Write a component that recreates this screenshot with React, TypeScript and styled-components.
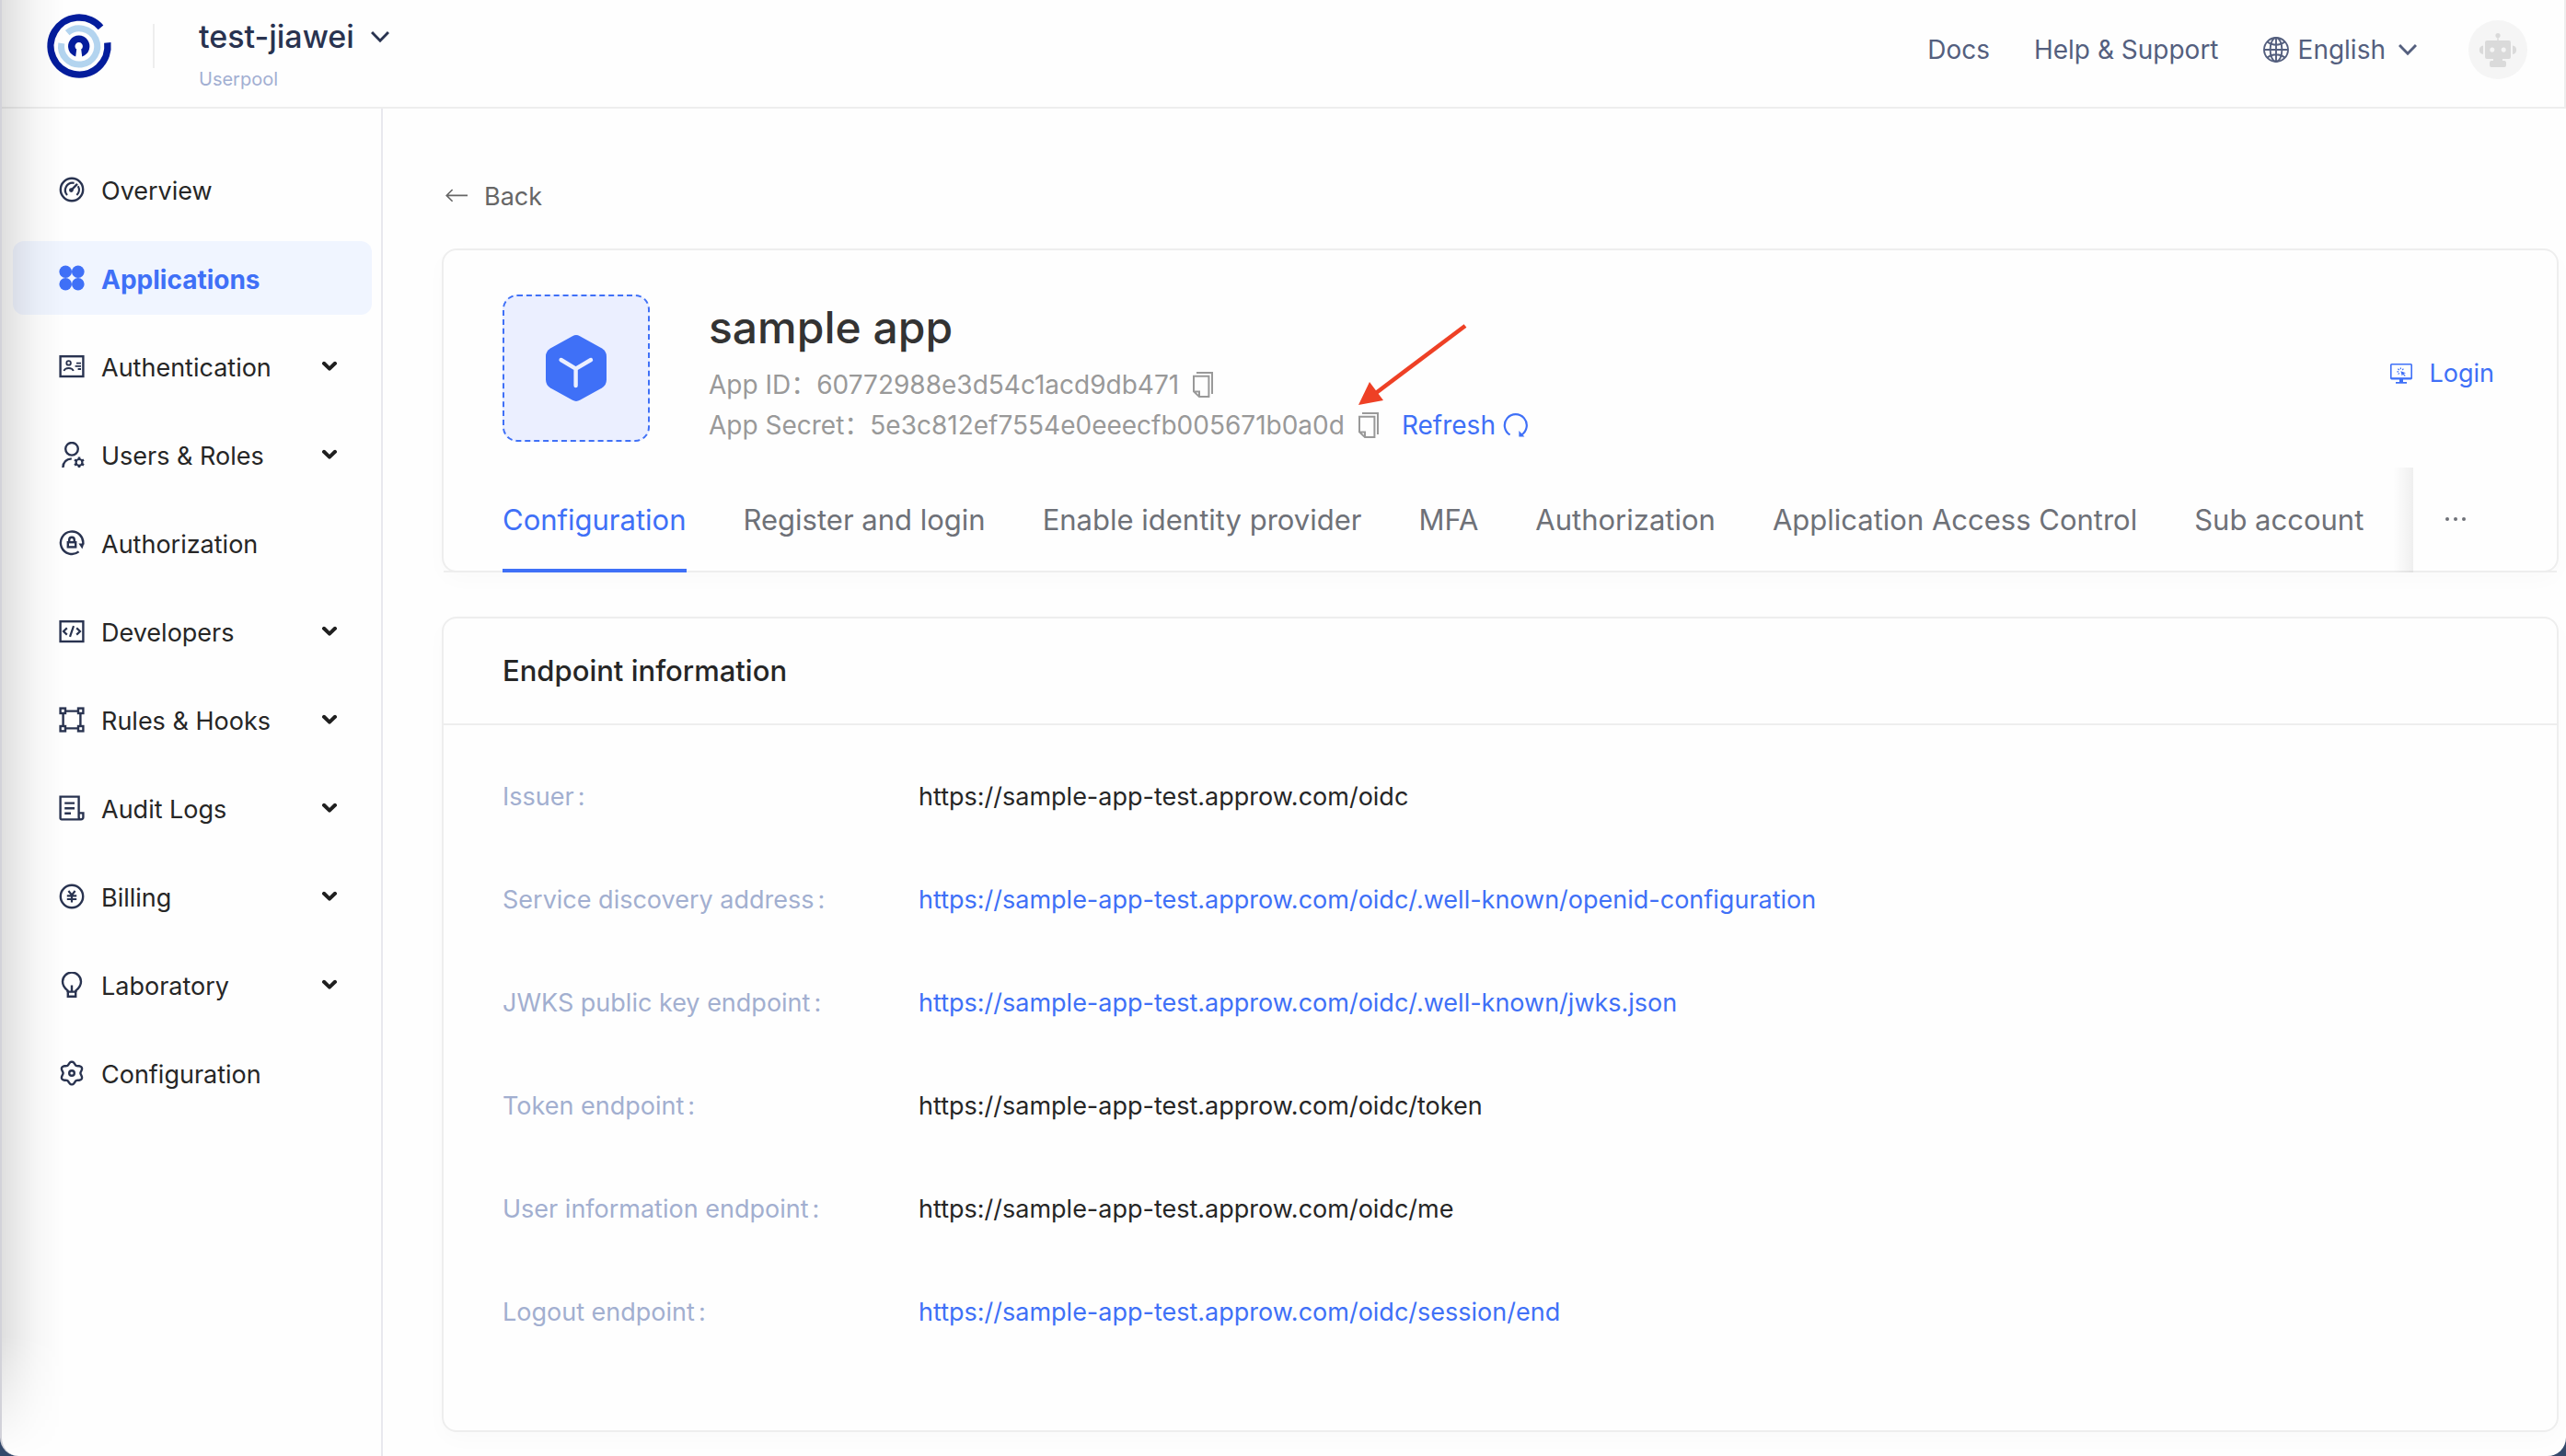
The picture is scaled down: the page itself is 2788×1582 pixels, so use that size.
import React from "react";
import styled, { createGlobalStyle, css } from "styled-components";

const blue = "#3f70f7";
const line = "#eeeeee";

const GlobalStyle = createGlobalStyle`
  *, *::before, *::after { box-sizing: border-box; }
  body {
    margin: 0;
    background: #34496b;
    color: #262626;
    font-family: Inter, "Noto Sans CJK SC", sans-serif;
    font-size: 27px;
    line-height: 44px;
  }
  h1, h2, p, dl, dd, ul { margin: 0; padding: 0; }
  a { color: inherit; text-decoration: none; }
  button {
    padding: 0;
    border: 0;
    background: none;
    color: inherit;
    font: inherit;
    cursor: pointer;
  }
  svg { display: block; flex: none; }
`;

const Window = styled.div`
  position: relative;
  display: flex;
  flex-direction: column;
  min-height: 100vh;
  overflow: hidden;
  border-left: 2px solid #d2d2d9;
  border-radius: 0 0 20px 20px;
  background: #fefefe;

  &::after {
    content: "";
    position: absolute;
    inset: 0 auto 0 0;
    width: 68px;
    pointer-events: none;
    background: linear-gradient(
      to right,
      rgba(0, 0, 0, 0.12),
      rgba(0, 0, 0, 0.08) 25%,
      rgba(0, 0, 0, 0.03) 55%,
      transparent
    );
    mask-image: linear-gradient(to bottom, #000 calc(100% - 130px), transparent);
  }
`;

const Header = styled.header`
  display: flex;
  justify-content: space-between;
  height: 118px;
  padding: 0 40px 0 48px;
  border-right: 2px solid ${line};
  border-bottom: 2px solid ${line};
`;

const Brand = styled.div`
  display: flex;
  align-items: flex-start;
  padding-top: 14px;
`;

const Divider = styled.span`
  width: 2px;
  height: 48px;
  margin: 12px 48px 0 44px;
  background: ${line};
`;

const Pool = styled.div`
  padding-top: 2px;
`;

const PoolButton = styled.button`
  display: flex;
  align-items: center;
  gap: 18px;
  color: #293350;
  font-size: 34px;
  font-weight: 500;
  line-height: 48px;
`;

const PoolKind = styled.p`
  margin-top: 8px;
  color: #a2afd2;
  font-size: 20px;
  line-height: 28px;
`;

const HeaderNav = styled.nav`
  display: flex;
  align-items: center;
  gap: 48px;
  padding-bottom: 8px;
  color: #545f7e;
  font-size: 28px;
`;

const Language = styled.button`
  display: flex;
  align-items: center;
  gap: 10px;

  svg:last-child { margin-left: 4px; }
`;

const Avatar = styled.button`
  width: 64px;
  height: 64px;
  margin-left: 8px;
  border-radius: 50%;
  background: #f5f5f5;
`;

const Body = styled.div`
  display: flex;
  flex: 1;
`;

const Sidebar = styled.nav`
  flex: none;
  width: 414px;
  padding: 48px 10px 48px 12px;
  border-right: 2px solid #e8e8ee;
`;

const MenuList = styled.ul`
  display: flex;
  flex-direction: column;
  gap: 16px;
  list-style: none;
`;

const MenuLink = styled.a<{ $active?: boolean }>`
  display: flex;
  align-items: center;
  gap: 18px;
  height: 80px;
  padding: 0 38px 0 50px;
  border-radius: 12px;
  color: #262626;

  > svg:first-child { color: #293350; }

  ${(p) =>
    p.$active &&
    css`
      background: #f0f5ff;
      color: ${blue};
      font-size: 28px;
      font-weight: 700;
      > svg:first-child { color: ${blue}; }
    `}
`;

const MenuText = styled.span`
  flex: 1;
  padding-top: 4px;
`;

const Main = styled.main`
  flex: 1;
  min-width: 0;
  padding: 74px 8px 26px 64px;
`;

const BackLink = styled.a`
  display: inline-flex;
  align-items: center;
  gap: 18px;
  margin-bottom: 34px;
  padding-left: 4px;
  color: #666666;
  vertical-align: top;
`;

const Card = styled.section`
  border: 2px solid ${line};
  border-radius: 16px;
  background: #fefefe;
  box-shadow: 0 8px 24px rgba(0, 30, 20, 0.02);

  & + & { margin-top: 48px; }
`;

const AppSummary = styled.div`
  display: flex;
  padding: 48px 64px 24px;
`;

const AppIcon = styled.div`
  display: grid;
  place-items: center;
  width: 160px;
  height: 160px;
  border: 2px dashed ${blue};
  border-radius: 16px;
  background: #ebefff;
`;

const AppText = styled.div`
  flex: 1;
  margin-left: 64px;
  padding-top: 4px;
  font-size: 28px;
`;

const AppName = styled.h1`
  margin-bottom: 8px;
  color: #333333;
  font-size: 48px;
  font-weight: 500;
  line-height: 64px;
`;

const Credential = styled.div`
  display: flex;
  align-items: center;
  width: max-content;
  color: #999999;
`;

const CopySpot = styled.span`
  position: relative;
  display: flex;
  margin-left: 14px;
`;

const Pointer = styled.svg`
  position: absolute;
  right: -96px;
  bottom: 34px;
  pointer-events: none;
`;

const RefreshButton = styled.button`
  display: flex;
  align-items: center;
  gap: 8px;
  margin-left: 24px;
  color: ${blue};
`;

const LoginLink = styled.a`
  display: flex;
  align-items: center;
  gap: 18px;
  align-self: flex-start;
  margin: 64px 4px 0 0;
  color: ${blue};
`;

const TabBar = styled.div`
  display: flex;
  height: 114px;
  margin-bottom: -2px;
  border-bottom: 2px solid ${line};
`;

const TabList = styled.div`
  display: flex;
  flex: 1;
  gap: 62px;
  min-width: 0;
  padding-left: 64px;
  color: #6e7178;
  font-size: 31px;
  white-space: nowrap;
`;

const Tab = styled.button`
  position: relative;
  padding-top: 2px;

  &[aria-selected="true"] { color: ${blue}; }

  &[aria-selected="true"]::after {
    content: "";
    position: absolute;
    inset: auto 0 -2px;
    height: 4px;
    background: ${blue};
  }
`;

const MoreButton = styled.button`
  position: relative;
  display: flex;
  align-items: center;
  width: 156px;
  padding-left: 34px;
  color: #6e7178;

  &::before {
    content: "";
    position: absolute;
    inset: 0 100% -2px auto;
    width: 22px;
    background: linear-gradient(to right, transparent, rgba(0, 0, 0, 0.06));
  }
`;

const CardTitle = styled.h2`
  padding: 35px 64px;
  border-bottom: 2px solid ${line};
  font-size: 31px;
  font-weight: 500;
`;

const EndpointList = styled.dl`
  padding: 46px 64px 48px;
`;

const EndpointRow = styled.div`
  display: flex;
  align-items: center;
  height: 64px;
  margin-bottom: 48px;
`;

const EndpointName = styled.dt`
  flex: none;
  width: 452px;
  color: #a2afd0;

  &::after {
    content: ":";
    margin-left: 4px;
  }
`;

const EndpointLink = styled.a`
  color: ${blue};
`;

const Stroke = ({
  size = 28,
  width = 2.4,
  children,
}: {
  size?: number;
  width?: number;
  children: React.ReactNode;
}) => (
  <svg
    width={size}
    height={size}
    viewBox="0 0 28 28"
    fill="none"
    stroke="currentColor"
    strokeWidth={width}
    aria-hidden="true"
  >
    {children}
  </svg>
);

const Logo = () => (
  <svg width="72" height="72" viewBox="0 0 72 72" fill="none" aria-label="Approw" role="img">
    <path d="M59.5 15.8A31 31 0 1 0 66.8 32.4" stroke="#041d9c" strokeWidth="7.4" />
    <path d="M23.2 21.7A19.6 19.6 0 1 1 16.8 33" stroke="#b3d4ef" strokeWidth="7" />
    <path
      d="M32.2 47.4A11.7 11.7 0 1 1 39.2 47.4L38.2 39.6A4.2 4.2 0 1 0 33.2 39.6Z"
      fill="#041d9c"
    />
  </svg>
);

const ChevronIcon = () => (
  <svg width="20" height="14" viewBox="0 0 20 14" fill="none" stroke="currentColor" strokeWidth="3" aria-hidden="true">
    <path d="M1 2L10 11.2L19 2" />
  </svg>
);

const MenuChevron = () => (
  <svg width="16" height="12" viewBox="0 0 16 12" fill="none" stroke="#1f1f1f" strokeWidth="4" strokeLinecap="round" strokeLinejoin="round" aria-hidden="true">
    <path d="M2 2.8L8 8.6L14 2.8" />
  </svg>
);

const GlobeIcon = () => (
  <Stroke width={1.9}>
    <circle cx="14" cy="14" r="13" />
    <ellipse cx="14" cy="14" rx="6.4" ry="13" />
    <path d="M14 1V27M1 14H27M4.5 5.5C10 9.8 18 9.8 23.5 5.5M4.5 22.5C10 18.2 18 18.2 23.5 22.5" />
  </Stroke>
);

const RobotIcon = () => (
  <svg width="64" height="64" viewBox="0 0 64 64" fill="#dadada" aria-hidden="true">
    <circle cx="32" cy="16.5" r="2.6" />
    <rect x="31.3" y="17" width="1.4" height="6" />
    <path d="M16 27.5V37A4.8 4.8 0 0 1 16 27.5ZM48 27.5A4.8 4.8 0 0 1 48 37Z" />
    <path
      fillRule="evenodd"
      d="M20 22H44A2 2 0 0 1 46 24V40A2 2 0 0 1 44 42H37V44H39A2 2 0 0 1 41 46V49A2 2 0 0 1 39 51H25A2 2 0 0 1 23 49V46A2 2 0 0 1 25 44H27V42H20A2 2 0 0 1 18 40V24A2 2 0 0 1 20 22ZM25.8 29.4A2.5 2.7 0 1 0 25.8 34.8A2.5 2.7 0 1 0 25.8 29.4ZM38.2 29.4A2.5 2.7 0 1 0 38.2 34.8A2.5 2.7 0 1 0 38.2 29.4Z"
    />
  </svg>
);

const OverviewIcon = () => (
  <Stroke>
    <circle cx="14" cy="14" r="12.2" />
    <path d="M9 20A8 8 0 0 1 16.6 6.8M20.8 10.2A8 8 0 0 1 19.4 20" strokeWidth="2.2" />
    <circle cx="13.4" cy="14.6" r="2.4" fill="currentColor" stroke="none" />
    <path d="M13.4 14.6L20 7.8" />
  </Stroke>
);

const AppsIcon = () => (
  <svg width="28" height="28" viewBox="0 0 28 28" fill="currentColor" aria-hidden="true">
    <circle cx="7.2" cy="7.2" r="6.8" />
    <circle cx="20.8" cy="7.2" r="6.8" />
    <circle cx="7.2" cy="20.8" r="6.8" />
    <circle cx="20.8" cy="20.8" r="6.8" />
  </svg>
);

const IdCardIcon = () => (
  <Stroke>
    <rect x="1.6" y="3.2" width="24.8" height="21.8" />
    <circle cx="10.6" cy="10.4" r="2.3" strokeWidth="1.8" />
    <path d="M5.4 19C7 15 14.2 15 15.8 19M19 10.6H24M17.6 13.8H24M20.6 17H24" strokeWidth="1.8" />
  </Stroke>
);

const UserGearIcon = () => (
  <Stroke>
    <circle cx="14" cy="7.8" r="6.8" />
    <path d="M4.4 28C4.6 22 8 18.8 13.8 18.4" />
    <circle cx="22" cy="22.4" r="3.4" strokeWidth="2.2" />
    <path d="M22 16.6V19M22 25.8V28.2M17 19.5L19 20.7M25 24.1L27 25.3M17 25.3L19 24.1M25 20.7L27 19.5" strokeWidth="2.6" />
  </Stroke>
);

const LockCycleIcon = () => (
  <Stroke>
    <path d="M26.2 15.5A12.2 12.2 0 1 0 21.6 23.4" />
    <path d="M21.4 14.6H27.4L25.4 20.4Z" fill="currentColor" stroke="none" />
    <rect x="9.8" y="13.2" width="8.4" height="5.2" />
    <path d="M11.2 13V10.6A2.8 2.8 0 0 1 16.8 10.6V13" />
  </Stroke>
);

const CodeIcon = () => (
  <Stroke>
    <rect x="1.6" y="3.2" width="24.8" height="21.8" />
    <path d="M8.8 10.4L5 14L8.8 17.6M19.2 10.4L23 14L19.2 17.6M16 8.2L12 19.8" strokeWidth="2.2" />
  </Stroke>
);

const NodesIcon = () => (
  <Stroke>
    <path d="M8 4.6H20M8 23.4H20M4.6 8V20M23.4 8V20" />
    <rect x="1.6" y="1.6" width="5.4" height="5.4" />
    <rect x="21" y="1.6" width="5.4" height="5.4" />
    <rect x="1.6" y="21" width="5.4" height="5.4" />
    <rect x="21" y="21" width="5.4" height="5.4" />
  </Stroke>
);

const LogIcon = () => (
  <Stroke>
    <path d="M24 26.4H3A1.4 1.4 0 0 1 1.6 25V1.6H21.6V24A2.4 2.4 0 0 0 26.4 24V19.4H21.6" />
    <path d="M6.2 8.6H17M6.2 14.2H17M6.2 19.8H13" />
  </Stroke>
);

const YenIcon = () => (
  <Stroke>
    <circle cx="14" cy="14" r="12.2" />
    <path d="M10.4 8L14 12.4L17.6 8M14 12V20.4M8.8 13.4H19.2M8.8 17H19.2" strokeWidth="2.2" />
  </Stroke>
);

const BulbIcon = () => (
  <Stroke>
    <path d="M9.6 22V20.4C6.4 18 4 15 4 10.6A10 10 0 0 1 24 10.6C24 15 21.6 18 18.4 20.4V22" />
    <path d="M14 14.4V21.6M9.8 21.6H18.2V26.8H9.8Z" />
  </Stroke>
);

const gearPath =
  Array.from({ length: 72 }, (_, i) => {
    const angle = (i * 5 * Math.PI) / 180;
    const radius = 10.9 + 1.5 * Math.cos(6 * angle);
    const x = (14 + radius * Math.sin(angle)).toFixed(2);
    const y = (14 - radius * Math.cos(angle)).toFixed(2);
    return `${i === 0 ? "M" : "L"}${x} ${y}`;
  }).join("") + "Z";

const GearIcon = () => (
  <Stroke>
    <path d={gearPath} strokeLinejoin="round" />
    <circle cx="14" cy="14" r="2.8" />
  </Stroke>
);

const ArrowLeftIcon = () => (
  <svg width="24" height="18" viewBox="0 0 24 18" fill="none" stroke="currentColor" strokeWidth="1.6" aria-hidden="true">
    <path d="M24 7.4H1.4M7.6 1L1.2 7.4L7.6 13.8" />
  </svg>
);

const CubeIcon = () => (
  <svg width="66" height="74" viewBox="0 0 66 74" aria-hidden="true">
    <path
      fill={blue}
      d="M29 2.2Q33 0 37 2.2L61 15.6Q66 18.6 66 24.5V49.5Q66 55.4 61 58.4L37 71.8Q33 74 29 71.8L5 58.4Q0 55.4 0 49.5V24.5Q0 18.6 5 15.6Z"
    />
    <path
      d="M16.6 28L32.6 37.6L49 28M32.6 37.6V56"
      fill="none"
      stroke="#ebefff"
      strokeWidth="4.4"
      strokeLinecap="round"
    />
  </svg>
);

const CopyIcon = () => (
  <svg width="24" height="28" viewBox="0 0 24 28" fill="none" stroke="currentColor" strokeWidth="2" aria-hidden="true">
    <path d="M5 1H22V24" />
    <path d="M2 4.8H18.4V27H8L2 21.4ZM2 21.4H8V27" />
  </svg>
);

const RefreshIcon = () => (
  <svg width="28" height="28" viewBox="0 0 28 28" aria-hidden="true">
    <path d="M7.6 24.4A12 12 0 1 1 20 24.4" fill="none" stroke="currentColor" strokeWidth="2.2" />
    <path d="M17.4 20V26.6H23.4Z" fill="currentColor" />
  </svg>
);

const MonitorIcon = () => (
  <svg width="24" height="24" viewBox="0 0 24 24" fill="none" stroke="currentColor" strokeWidth="1.6" aria-hidden="true">
    <rect x="0.8" y="1.8" width="22.4" height="15.8" rx="0.8" />
    <path d="M12 18V21.4" strokeWidth="4" />
    <path d="M6 21.8H18M1 17.2H23" strokeWidth="1.8" />
    <path d="M11.4 9.2L17 11.2L14.6 12L16.8 14.2L15.6 14.8L13.8 12.8L12.8 14.4Z" fill="currentColor" stroke="none" />
    <path d="M11.4 5.4V7.2M7.4 9.8H9.2M8.4 6.8L9.8 8M14.4 6.6L13.2 8M8.6 12.6L10 11.4" strokeWidth="1.2" />
  </svg>
);

const DotsIcon = () => (
  <svg width="24" height="6" viewBox="0 0 24 6" fill="currentColor" aria-hidden="true">
    <circle cx="3" cy="3" r="2" />
    <circle cx="12" cy="3" r="2" />
    <circle cx="21" cy="3" r="2" />
  </svg>
);

const menu = [
  { label: "Overview", Icon: OverviewIcon },
  { label: "Applications", Icon: AppsIcon, active: true },
  { label: "Authentication", Icon: IdCardIcon, nested: true },
  { label: "Users & Roles", Icon: UserGearIcon, nested: true },
  { label: "Authorization", Icon: LockCycleIcon },
  { label: "Developers", Icon: CodeIcon, nested: true },
  { label: "Rules & Hooks", Icon: NodesIcon, nested: true },
  { label: "Audit Logs", Icon: LogIcon, nested: true },
  { label: "Billing", Icon: YenIcon, nested: true },
  { label: "Laboratory", Icon: BulbIcon, nested: true },
  { label: "Configuration", Icon: GearIcon },
];

const tabs = [
  "Configuration",
  "Register and login",
  "Enable identity provider",
  "MFA",
  "Authorization",
  "Application Access Control",
  "Sub account",
];

const endpoints = [
  { name: "Issuer", url: "https://sample-app-test.approw.com/oidc" },
  {
    name: "Service discovery address",
    url: "https://sample-app-test.approw.com/oidc/.well-known/openid-configuration",
    link: true,
  },
  {
    name: "JWKS public key endpoint",
    url: "https://sample-app-test.approw.com/oidc/.well-known/jwks.json",
    link: true,
  },
  { name: "Token endpoint", url: "https://sample-app-test.approw.com/oidc/token" },
  { name: "User information endpoint", url: "https://sample-app-test.approw.com/oidc/me" },
  {
    name: "Logout endpoint",
    url: "https://sample-app-test.approw.com/oidc/session/end",
    link: true,
  },
];

export default function App() {
  return (
    <>
      <GlobalStyle />
      <Window>
        <Header>
          <Brand>
            <Logo />
            <Divider />
            <Pool>
              <PoolButton type="button">
                test-jiawei
                <ChevronIcon />
              </PoolButton>
              <PoolKind>Userpool</PoolKind>
            </Pool>
          </Brand>
          <HeaderNav>
            <a href="#docs">Docs</a>
            <a href="#help">Help &amp; Support</a>
            <Language type="button">
              <GlobeIcon />
              English
              <ChevronIcon />
            </Language>
            <Avatar type="button" aria-label="Account">
              <RobotIcon />
            </Avatar>
          </HeaderNav>
        </Header>
        <Body>
          <Sidebar>
            <MenuList>
              {menu.map(({ label, Icon, active, nested }) => (
                <li key={label}>
                  <MenuLink href="#menu" $active={active} aria-current={active ? "page" : undefined}>
                    <Icon />
                    <MenuText>{label}</MenuText>
                    {nested && <MenuChevron />}
                  </MenuLink>
                </li>
              ))}
            </MenuList>
          </Sidebar>
          <Main>
            <BackLink href="#back">
              <ArrowLeftIcon />
              Back
            </BackLink>
            <Card>
              <AppSummary>
                <AppIcon>
                  <CubeIcon />
                </AppIcon>
                <AppText>
                  <AppName>sample app</AppName>
                  <Credential>
                    App ID：60772988e3d54c1acd9db471
                    <CopySpot>
                      <button type="button" aria-label="Copy app ID">
                        <CopyIcon />
                      </button>
                    </CopySpot>
                  </Credential>
                  <Credential>
                    App Secret：5e3c812ef7554e0eeecfb005671b0a0d
                    <CopySpot>
                      <button type="button" aria-label="Copy app secret">
                        <CopyIcon />
                      </button>
                      <Pointer width="120" height="92" viewBox="0 0 120 92" aria-hidden="true">
                        <path d="M117 4L20 77" stroke="#ee4025" strokeWidth="4.6" />
                        <path d="M1 90L13 65L28 85Z" fill="#ee4025" />
                      </Pointer>
                    </CopySpot>
                    <RefreshButton type="button">
                      Refresh
                      <RefreshIcon />
                    </RefreshButton>
                  </Credential>
                </AppText>
                <LoginLink href="#login">
                  <MonitorIcon />
                  Login
                </LoginLink>
              </AppSummary>
              <TabBar>
                <TabList role="tablist">
                  {tabs.map((tab, i) => (
                    <Tab key={tab} type="button" role="tab" aria-selected={i === 0}>
                      {tab}
                    </Tab>
                  ))}
                </TabList>
                <MoreButton type="button" aria-label="More tabs">
                  <DotsIcon />
                </MoreButton>
              </TabBar>
            </Card>
            <Card>
              <CardTitle>Endpoint information</CardTitle>
              <EndpointList>
                {endpoints.map(({ name, url, link }) => (
                  <EndpointRow key={name}>
                    <EndpointName>{name}</EndpointName>
                    <dd>{link ? <EndpointLink href={url}>{url}</EndpointLink> : url}</dd>
                  </EndpointRow>
                ))}
              </EndpointList>
            </Card>
          </Main>
        </Body>
      </Window>
    </>
  );
}
